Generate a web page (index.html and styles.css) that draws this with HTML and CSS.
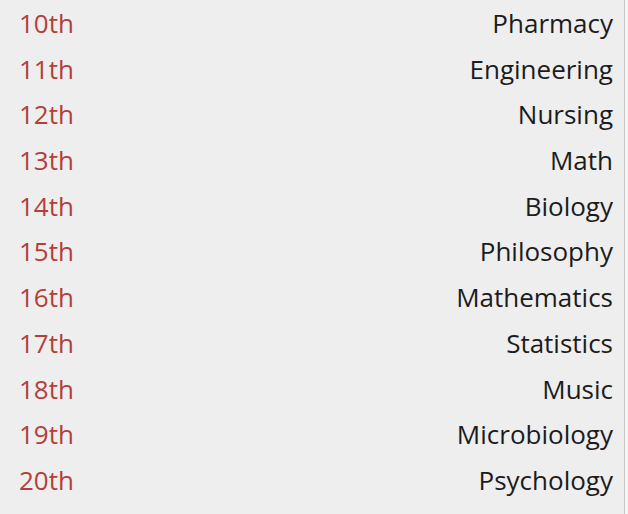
FILE: index.html
```html
<!DOCTYPE html>
<html lang="en">
<head>
<meta charset="utf-8">
<link rel="stylesheet" href="styles.css">
<title>Rankings</title>
</head>
<body>
<div class="frame">
  <ul class="ranking">
    <li class="row"><span class="rank">10th</span><span class="subject">Pharmacy</span></li>
    <li class="row"><span class="rank">11th</span><span class="subject">Engineering</span></li>
    <li class="row"><span class="rank">12th</span><span class="subject">Nursing</span></li>
    <li class="row"><span class="rank">13th</span><span class="subject">Math</span></li>
    <li class="row"><span class="rank">14th</span><span class="subject">Biology</span></li>
    <li class="row"><span class="rank">15th</span><span class="subject">Philosophy</span></li>
    <li class="row"><span class="rank">16th</span><span class="subject">Mathematics</span></li>
    <li class="row"><span class="rank">17th</span><span class="subject">Statistics</span></li>
    <li class="row"><span class="rank">18th</span><span class="subject">Music</span></li>
    <li class="row"><span class="rank">19th</span><span class="subject">Microbiology</span></li>
    <li class="row"><span class="rank">20th</span><span class="subject">Psychology</span></li>
  </ul>
</div>
</body>
</html>
```
FILE: styles.css
```css
html, body {
  margin: 0;
  padding: 0;
  background: #f6f6f6;
}
.frame {
  width: 625px;
  height: 514px;
  box-sizing: border-box;
  background: #efeeee;
  border-right: 1px solid #c9c9c9;
  overflow: hidden;
}
.ranking {
  list-style: none;
  margin: 0;
  padding: 1px 11px 0 19px;
  font-family: "Open Sans", "Liberation Sans", sans-serif;
  font-size: 26px;
  line-height: 45.7px;
}
.row {
  display: flex;
  justify-content: space-between;
  align-items: baseline;
  height: 45.7px;
}
.rank {
  color: #b2403a;
}
.subject {
  color: #1c1c1c;
}
```
